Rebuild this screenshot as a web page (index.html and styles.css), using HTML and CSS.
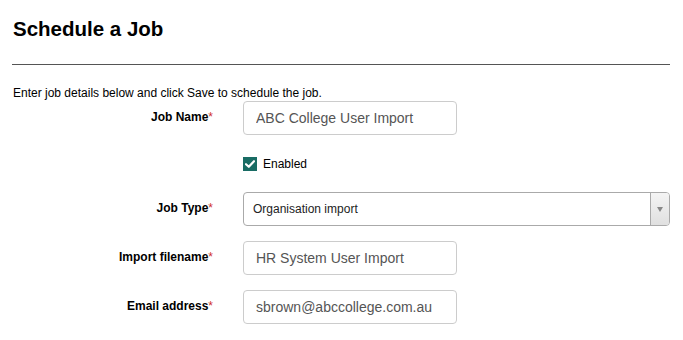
FILE: index.html
```html
<!DOCTYPE html>
<html lang="en">

<head>
    <meta charset="UTF-8">
    <meta name="viewport" content="width=device-width, initial-scale=1.0">
    <title>Schedule a Job</title>
    <link rel="stylesheet" href="styles.css">
</head>

<body>
    <div class="page">
        <h1 class="title">Schedule a Job</h1>
        <hr class="divider">

        <p class="intro">Enter job details below and click Save to schedule the job.</p>

        <form class="job-form">
            <div class="form-row">
                <label class="field-label">Job Name<span class="req">*</span></label>
                <input type="text" class="text-input" value="ABC College User Import">
            </div>

            <div class="form-row check-row">
                <span class="field-label"></span>
                <label class="check">
                    <span class="check-box">
                        <svg width="10" height="8" viewBox="0 0 10 8">
                            <path d="M1 4.2 L3.8 6.8 L9 1.2" fill="none" stroke="#fff" stroke-width="2.2" stroke-linecap="round" stroke-linejoin="round"/>
                        </svg>
                    </span>
                    Enabled
                </label>
            </div>

            <div class="form-row">
                <label class="field-label">Job Type<span class="req">*</span></label>
                <div class="select">
                    <span class="select-value">Organisation import</span>
                    <span class="select-btn"><span class="arrow"></span></span>
                </div>
            </div>

            <div class="form-row">
                <label class="field-label">Import filename<span class="req">*</span></label>
                <input type="text" class="text-input" value="HR System User Import">
            </div>

            <div class="form-row">
                <label class="field-label">Email address<span class="req">*</span></label>
                <input type="text" class="text-input" value="sbrown@abccollege.com.au">
            </div>
        </form>
    </div>
</body>

</html>
```

FILE: styles.css
```css
* {
    margin: 0;
    padding: 0;
    box-sizing: border-box;
}

body {
    font-family: 'Liberation Sans', Arial, sans-serif;
    background: #fff;
    color: #000;
}

.page {
    padding: 18px 13px 0 12px;
}

.title {
    font-size: 20.5px;
    font-weight: bold;
    line-height: 22px;
    padding-left: 1px;
}

.divider {
    border: none;
    border-top: 1px solid #555;
    margin-top: 24px;
    width: 658px;
}

.intro {
    font-size: 12px;
    line-height: 14px;
    margin-top: 21px;
    padding-left: 1px;
}

.job-form {
    display: flex;
    flex-direction: column;
    gap: 15px;
    margin-top: 1px;
}

.form-row {
    display: flex;
    align-items: center;
}

.field-label {
    width: 231px;
    padding-right: 30px;
    text-align: right;
    font-size: 12px;
    font-weight: bold;
    align-self: flex-start;
    padding-top: 9px;
    flex-shrink: 0;
}

.req {
    color: #d0312d;
    font-weight: normal;
}

.text-input {
    width: 214px;
    height: 34px;
    border: 1px solid #ccc;
    border-radius: 4px;
    padding: 0 12px;
    font-family: 'Liberation Sans', Arial, sans-serif;
    font-size: 14px;
    color: #555;
    background: #fff;
}

.check-row {
    margin: 7px 0 6px;
}

.check-row .field-label {
    padding-top: 0;
}

.check {
    display: flex;
    align-items: center;
    gap: 6px;
    font-size: 12px;
}

.check-box {
    width: 14px;
    height: 14px;
    background: #196c64;
    display: flex;
    align-items: center;
    justify-content: center;
}

.select {
    width: 428px;
    height: 34px;
    border: 1px solid #aaa;
    border-radius: 4px;
    display: flex;
    align-items: center;
    overflow: hidden;
}

.select-value {
    flex: 1;
    font-size: 12px;
    color: #222;
    padding-left: 9px;
}

.select-btn {
    width: 19px;
    height: 100%;
    border-left: 1px solid #aaa;
    background: linear-gradient(#f4f4f4, #e0e0e0);
    display: flex;
    align-items: center;
    justify-content: center;
}

.arrow {
    width: 0;
    height: 0;
    border-left: 3px solid transparent;
    border-right: 3px solid transparent;
    border-top: 5px solid #888;
}
```
